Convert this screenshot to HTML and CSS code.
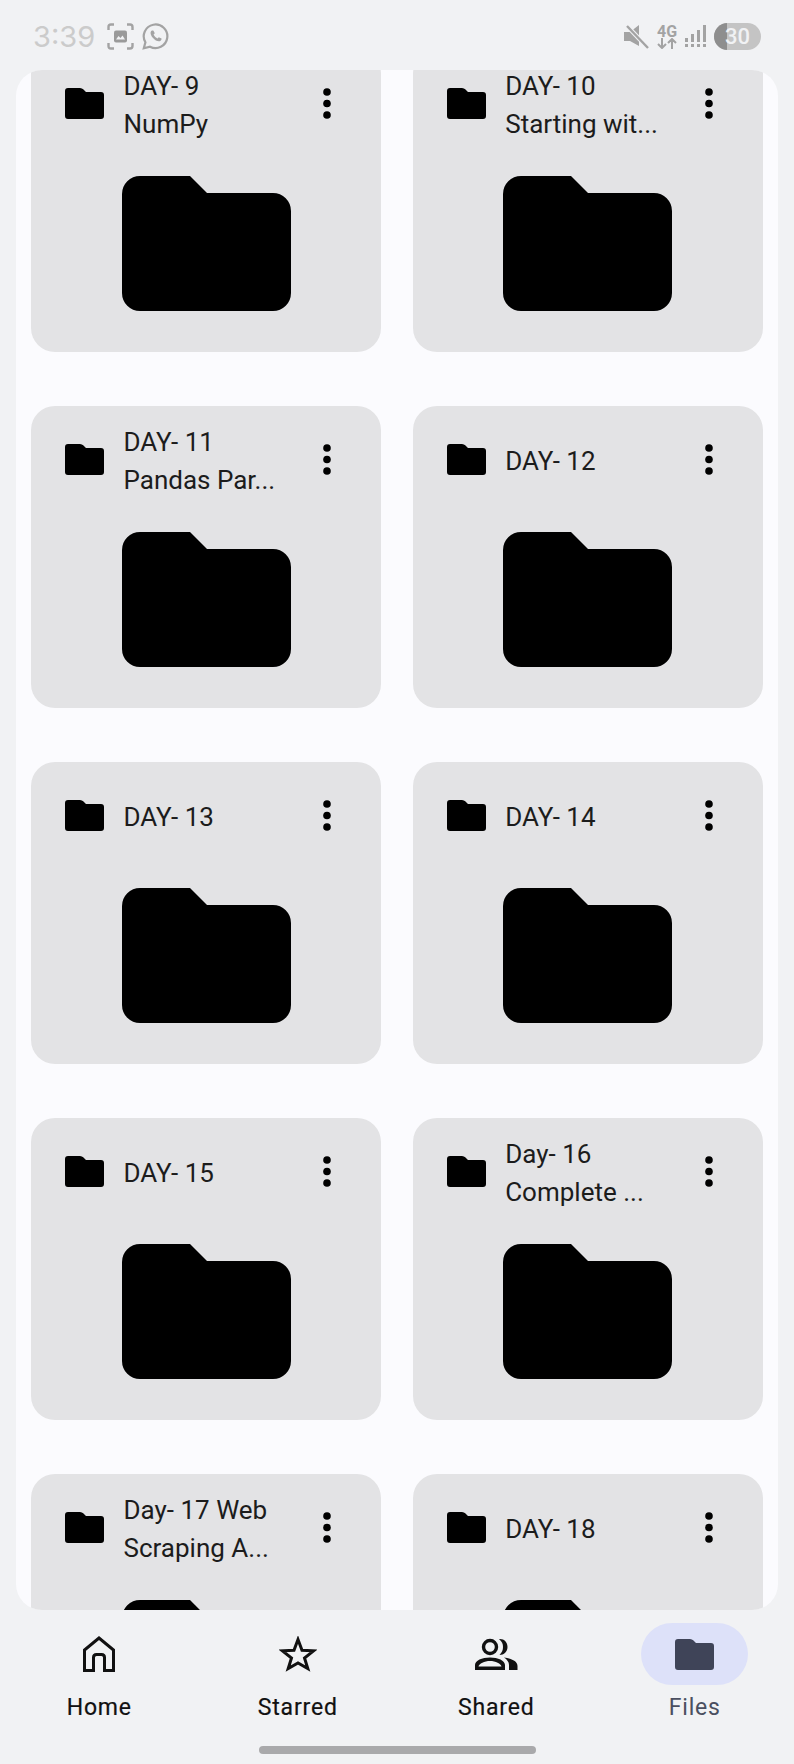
FILE: index.html
```html
<!DOCTYPE html>
<html lang="en">
<head>
<meta charset="UTF-8">
<meta name="viewport" content="width=device-width, initial-scale=1.0">
<title>Files</title>
<link rel="stylesheet" href="styles.css">
</head>
<body>

<svg class="sprites" width="0" height="0">
  <symbol id="folderSmall" viewBox="0 0 39 31">
    <path d="M3 0H15Q17 0 18.500 1.500L21 4H36Q39 4 39 7V28Q39 31 36 31H3Q0 31 0 28V3Q0 0 3 0Z"/>
  </symbol>
  <symbol id="folderBig" viewBox="0 0 169 135">
    <path d="M18 0H68L85 17H151A18 18 0 0 1 169 35V117A18 18 0 0 1 151 135H18A18 18 0 0 1 0 117V18A18 18 0 0 1 18 0Z"/>
  </symbol>
  <symbol id="dots" viewBox="0 0 8 31">
    <circle cx="4" cy="4" r="3.800"/>
    <circle cx="4" cy="15.500" r="3.800"/>
    <circle cx="4" cy="27" r="3.800"/>
  </symbol>
</svg>

<div class="statusBar">
  <div class="statusLeft">
    <span class="clock">3:39</span>
    <svg class="statusIcon" width="27" height="27" viewBox="0 0 27 27" fill="none" stroke="#a3a3a3" stroke-width="2.400">
      <path d="M1.500 7V4Q1.500 1.500 4 1.500H7M20 1.500H23Q25.500 1.500 25.500 4V7M25.500 20V23Q25.500 25.500 23 25.500H20M7 25.500H4Q1.500 25.500 1.500 23V20"/>
      <rect x="7" y="7.500" width="13" height="12" rx="2" fill="#9a9a9a" stroke="none"/>
      <path d="M9 16.500L11.500 13L13.500 15L15.500 12.500L18 16.500Z" fill="#f1f2f4" stroke="none"/>
    </svg>
    <svg class="statusIcon" width="27" height="27" viewBox="0 0 27 27" fill="none" stroke="#a3a3a3" stroke-width="2.200">
      <path d="M1.800 25.200L3.400 19.300A11.800 11.800 0 1 1 8 23.700Z"/>
      <path d="M9.500 7.800C8 9 8.300 11.800 10.800 14.800C13.300 17.800 16.500 19 18.300 18C19.500 17.300 19.800 16 19.500 15.600L16.800 14.200L15.500 15.600C14 15 12.300 13.200 11.600 11.600L12.800 10.300L11.500 7.700C11 7.300 10.200 7.300 9.500 7.800Z" fill="#a3a3a3" stroke="none"/>
    </svg>
  </div>
  <div class="statusRight">
    <svg width="25" height="24" viewBox="0 0 25 24">
      <path d="M0 7H6L15 0V21L6 16H0Z" fill="#a3a3a3"/>
      <path d="M3 1L24 23" stroke="#f1f2f4" stroke-width="4.500"/>
      <path d="M3 1L24 23" stroke="#a3a3a3" stroke-width="2.400"/>
    </svg>
    <div class="netType">
      <span>4G</span>
      <svg width="22" height="11" viewBox="0 0 22 11" fill="none" stroke="#a3a3a3" stroke-width="2">
        <path d="M6 0V10M2 6L6 10L10 6M16 11V1M12 5L16 1L20 5"/>
      </svg>
    </div>
    <svg width="22" height="24" viewBox="0 0 22 24" fill="#a3a3a3">
      <rect x="0" y="13" width="3" height="4"/><rect x="0" y="19" width="3" height="3"/>
      <rect x="6" y="9" width="3" height="8"/><rect x="6" y="19" width="3" height="3"/>
      <rect x="12" y="5" width="3" height="12"/><rect x="12" y="19" width="3" height="3"/>
      <rect x="18" y="0" width="3" height="17"/><rect x="18" y="19" width="3" height="3"/>
    </svg>
    <div class="battery"><span class="batteryFill"></span><span class="batteryText">30</span></div>
  </div>
</div>

<div class="sheet">
  <div class="fileGrid">

    <div class="card">
      <div class="cardHead">
        <svg class="folderSmall"><use href="#folderSmall"/></svg>
        <div class="cardTitle">DAY- 9 NumPy</div>
        <svg class="moreBtn"><use href="#dots"/></svg>
      </div>
      <svg class="folderBig"><use href="#folderBig"/></svg>
    </div>

    <div class="card">
      <div class="cardHead">
        <svg class="folderSmall"><use href="#folderSmall"/></svg>
        <div class="cardTitle">DAY- 10 Starting wit...</div>
        <svg class="moreBtn"><use href="#dots"/></svg>
      </div>
      <svg class="folderBig"><use href="#folderBig"/></svg>
    </div>

    <div class="card">
      <div class="cardHead">
        <svg class="folderSmall"><use href="#folderSmall"/></svg>
        <div class="cardTitle">DAY- 11 Pandas Par...</div>
        <svg class="moreBtn"><use href="#dots"/></svg>
      </div>
      <svg class="folderBig"><use href="#folderBig"/></svg>
    </div>

    <div class="card">
      <div class="cardHead">
        <svg class="folderSmall"><use href="#folderSmall"/></svg>
        <div class="cardTitle">DAY- 12</div>
        <svg class="moreBtn"><use href="#dots"/></svg>
      </div>
      <svg class="folderBig"><use href="#folderBig"/></svg>
    </div>

    <div class="card">
      <div class="cardHead">
        <svg class="folderSmall"><use href="#folderSmall"/></svg>
        <div class="cardTitle">DAY- 13</div>
        <svg class="moreBtn"><use href="#dots"/></svg>
      </div>
      <svg class="folderBig"><use href="#folderBig"/></svg>
    </div>

    <div class="card">
      <div class="cardHead">
        <svg class="folderSmall"><use href="#folderSmall"/></svg>
        <div class="cardTitle">DAY- 14</div>
        <svg class="moreBtn"><use href="#dots"/></svg>
      </div>
      <svg class="folderBig"><use href="#folderBig"/></svg>
    </div>

    <div class="card">
      <div class="cardHead">
        <svg class="folderSmall"><use href="#folderSmall"/></svg>
        <div class="cardTitle">DAY- 15</div>
        <svg class="moreBtn"><use href="#dots"/></svg>
      </div>
      <svg class="folderBig"><use href="#folderBig"/></svg>
    </div>

    <div class="card">
      <div class="cardHead">
        <svg class="folderSmall"><use href="#folderSmall"/></svg>
        <div class="cardTitle">Day- 16 Complete ...</div>
        <svg class="moreBtn"><use href="#dots"/></svg>
      </div>
      <svg class="folderBig"><use href="#folderBig"/></svg>
    </div>

    <div class="card">
      <div class="cardHead">
        <svg class="folderSmall"><use href="#folderSmall"/></svg>
        <div class="cardTitle">Day- 17 Web Scraping A...</div>
        <svg class="moreBtn"><use href="#dots"/></svg>
      </div>
      <svg class="folderBig"><use href="#folderBig"/></svg>
    </div>

    <div class="card">
      <div class="cardHead">
        <svg class="folderSmall"><use href="#folderSmall"/></svg>
        <div class="cardTitle">DAY- 18</div>
        <svg class="moreBtn"><use href="#dots"/></svg>
      </div>
      <svg class="folderBig"><use href="#folderBig"/></svg>
    </div>

  </div>
</div>

<nav class="bottomNav">
  <div class="navItem">
    <div class="navIcon">
      <svg width="32" height="36" viewBox="0 0 32 36" fill="none" stroke="#111" stroke-width="3">
        <path d="M1.500 34.500V14L16 2L30.500 14V34.500H21.500V21.500Q21.500 18.500 18.500 18.500H13.500Q10.500 18.500 10.500 21.500V34.500Z"/>
      </svg>
    </div>
    <span class="navLabel">Home</span>
  </div>
  <div class="navItem">
    <div class="navIcon">
      <svg width="38" height="36" viewBox="0 0 38 36" fill="none" stroke="#111" stroke-width="3" stroke-linejoin="miter">
        <path d="M19 3.500L23 14.300L34.500 14.800L25.500 22L28.800 32.500L19 27L9.200 32.500L12.500 22L3.500 14.800L15 14.300Z"/>
      </svg>
    </div>
    <span class="navLabel">Starred</span>
  </div>
  <div class="navItem">
    <div class="navIcon">
      <svg width="44" height="33" viewBox="0 0 44 33">
        <circle cx="16" cy="9" r="6.500" fill="none" stroke="#111" stroke-width="3.400"/>
        <path d="M1 32V27C1 22.500 8 19.500 16 19.500C24 19.500 31 22.500 31 27V32H1ZM4.500 28.500H27.500C27 25.500 21.500 23 16 23C10.500 23 5 25.500 4.500 28.500Z" fill="#111" fill-rule="evenodd"/>
        <path d="M25 1C30 .5 33.500 4 33.500 9C33.500 13.500 30 17 25.500 17C28 14.500 29 12 29 9C29 6 28 3.500 25 1Z" fill="#111"/>
        <path d="M30 19.500C37 20.500 43.500 23 43.500 28V32H35V27C35 24 33 21.500 30 19.500Z" fill="#111"/>
      </svg>
    </div>
    <span class="navLabel">Shared</span>
  </div>
  <div class="navItem navItemActive">
    <div class="navIcon navPill">
      <svg width="39" height="31" viewBox="0 0 39 31"><use href="#folderSmall"/></svg>
    </div>
    <span class="navLabel">Files</span>
  </div>
</nav>

<div class="homeBar"><span class="homeHandle"></span></div>

</body>
</html>
```

FILE: styles.css
```css
html, body {
  margin: 0;
  padding: 0;
}
body {
  width: 794px;
  height: 1764px;
  overflow: hidden;
  background-color: #f1f2f4;
  font-family: Roboto, "Noto Sans", sans-serif;
  color: #111;
}
.sprites {
  display: block;
  height: 0;
}

/* Status bar */
.statusBar {
  height: 70px;
  box-sizing: border-box;
  padding: 22px 33px 0 33px;
  display: flex;
  justify-content: space-between;
  align-items: flex-start;
}
.statusLeft {
  display: flex;
  align-items: center;
  height: 29px;
}
.clock {
  font-family: Inter, sans-serif;
  font-size: 29px;
  font-weight: 400;
  color: #cbcbcb;
  margin-right: 12px;
}
.statusIcon {
  margin-right: 8px;
}
.statusRight {
  display: flex;
  align-items: center;
  gap: 7px;
  height: 29px;
}
.netType {
  display: flex;
  flex-direction: column;
  align-items: center;
  font-size: 16px;
  font-weight: 700;
  line-height: 13px;
  color: #a3a3a3;
}
.battery {
  position: relative;
  width: 47px;
  height: 27px;
  border-radius: 14px;
  background-color: #c4c4c4;
  overflow: hidden;
  text-align: center;
}
.batteryFill {
  position: absolute;
  left: 0;
  top: 0;
  width: 13px;
  height: 27px;
  background-color: #8e8e8e;
}
.batteryText {
  position: relative;
  font-size: 22px;
  font-weight: 500;
  line-height: 27px;
  color: #f1f2f4;
}

/* File sheet */
.sheet {
  height: 1540px;
  margin: 0 16px;
  padding: 0 15px;
  background-color: #fbfbfe;
  border-radius: 26px;
  overflow: hidden;
}
.fileGrid {
  display: grid;
  grid-template-columns: 350.300px 350.300px;
  column-gap: 31.400px;
  row-gap: 54.500px;
  margin-top: -20px;
}
.card {
  height: 301.500px;
  background-color: #e3e3e5;
  border-radius: 24px;
  display: flex;
  flex-direction: column;
}
.cardHead {
  height: 106px;
  display: flex;
  align-items: center;
  padding: 0 50px 0 34px;
  flex-shrink: 0;
}
.folderSmall {
  width: 39px;
  height: 31px;
  flex-shrink: 0;
}
.cardTitle {
  width: 160px;
  margin-left: 19.500px;
  padding-top: 4px;
  font-size: 26px;
  line-height: 38.5px;
  color: #1c1c1c;
}
.moreBtn {
  width: 8px;
  height: 31px;
  margin-left: auto;
  flex-shrink: 0;
}
.folderBig {
  width: 169px;
  height: 135px;
  margin: 20px 0 0 90.500px;
  flex-shrink: 0;
}

/* Bottom navigation */
.bottomNav {
  height: 136px;
  box-sizing: border-box;
  padding-top: 13px;
  display: grid;
  grid-template-columns: repeat(4, 198.500px);
}
.navItem {
  display: flex;
  flex-direction: column;
  align-items: center;
}
.navIcon {
  width: 107px;
  height: 62px;
  display: flex;
  align-items: center;
  justify-content: center;
}
.navPill {
  background-color: #dde1f9;
  border-radius: 31px;
  fill: #3f4458;
}
.navLabel {
  margin-top: 9px;
  font-size: 23px;
  font-weight: 400;
  letter-spacing: 0.8px;
  line-height: 28px;
  -webkit-text-stroke: 0.2px #111;
}
.navItemActive .navLabel {
  color: #4a4f60;
  -webkit-text-stroke: 0;
}
.homeBar {
  display: flex;
  justify-content: center;
}
.homeHandle {
  width: 277px;
  height: 8px;
  border-radius: 4px;
  background-color: #a9a9ab;
}
```
